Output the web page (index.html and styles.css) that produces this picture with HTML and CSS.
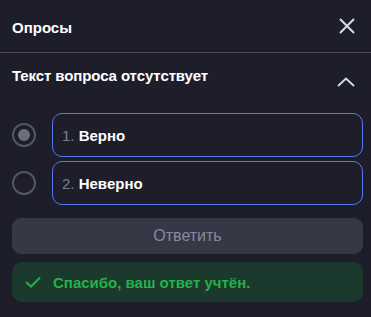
FILE: index.html
```html
<!DOCTYPE html>
<html lang="ru">
<head>
    <meta charset="UTF-8">
    <meta name="viewport" content="width=device-width, initial-scale=1.0">
    <title>Опросы</title>
    <link rel="stylesheet" href="styles.css">
</head>
<body>
    <div class="panel">
        <div class="panel_header">
            <span class="panel_title">Опросы</span>
            <svg class="icon_close" width="16" height="16" viewBox="0 0 16 16">
                <path d="M1 1 L15 15 M15 1 L1 15" stroke="#d6daef" stroke-width="2" fill="none"/>
            </svg>
        </div>

        <div class="question">
            <span class="question_text">Текст вопроса отсутствует</span>
            <svg class="icon_chevron" width="18" height="10" viewBox="0 0 18 10">
                <path d="M1 9 L9 1.5 L17 9" stroke="#d6daef" stroke-width="1.8" fill="none"/>
            </svg>
        </div>

        <div class="options">
            <div class="option">
                <span class="radio checked"></span>
                <div class="option_box"><span class="num">1.</span> Верно</div>
            </div>
            <div class="option">
                <span class="radio"></span>
                <div class="option_box"><span class="num">2.</span> Неверно</div>
            </div>
        </div>

        <button class="answer_btn" disabled>Ответить</button>

        <div class="success">
            <svg class="icon_check" width="16" height="12" viewBox="0 0 16 12">
                <path d="M1 6 L6 10.5 L15 1.5" stroke="#22b348" stroke-width="2" fill="none"/>
            </svg>
            <span>Спасибо, ваш ответ учтён.</span>
        </div>
    </div>
</body>
</html>
```

FILE: styles.css
```css
body {
    margin: 0;
    padding: 0;
    background-color: #1e1e2b;
    font-family: "Liberation Sans", Arial, sans-serif;
    color: #ffffff;
}

.panel {
    background-color: #1e1e2b;
    border-top-left-radius: 6px;
    min-height: 317px;
    box-sizing: border-box;
    padding-bottom: 12px;
}

.panel_header {
    height: 52px;
    display: flex;
    align-items: center;
    justify-content: space-between;
    padding: 0 16px 0 12px;
    border-bottom: 1px solid #4b4b5c;
}

.panel_title {
    font-size: 15px;
    font-weight: bold;
    margin-top: 2px;
}

.icon_close {
    margin-top: -1px;
}

.question {
    display: flex;
    justify-content: space-between;
    align-items: flex-start;
    padding: 14px 16px 0 12px;
    height: 46px;
}

.question_text {
    font-size: 15px;
    font-weight: bold;
    letter-spacing: -0.1px;
}

.icon_chevron {
    margin-top: 10px;
}

.options {
    display: flex;
    flex-direction: column;
    gap: 4px;
    padding: 0 8px 0 12px;
}

.option {
    display: flex;
    align-items: center;
    gap: 16px;
}

.radio {
    width: 20px;
    height: 20px;
    border: 2px solid #545566;
    border-radius: 50%;
    flex-shrink: 0;
    display: flex;
    align-items: center;
    justify-content: center;
}

.radio.checked::after {
    content: "";
    width: 12px;
    height: 12px;
    border-radius: 50%;
    background-color: #6c6d7f;
}

.option_box {
    flex: 1;
    height: 42px;
    border: 1px solid #5878f0;
    border-radius: 10px;
    display: flex;
    align-items: center;
    padding-left: 9px;
    font-size: 15px;
    font-weight: bold;
    white-space: pre;
}

.num {
    color: #7d7f90;
    font-weight: normal;
}

.answer_btn {
    display: block;
    width: calc(100% - 20px);
    margin: 13px 8px 0 12px;
    height: 36px;
    border: none;
    border-radius: 9px;
    background-color: #373846;
    color: #878a9c;
    font-family: "Liberation Sans", Arial, sans-serif;
    font-size: 16px;
}

.success {
    display: flex;
    align-items: center;
    gap: 12px;
    margin: 8px 8px 0 12px;
    height: 40px;
    padding-left: 13px;
    border-radius: 10px;
    background-color: #1c392d;
    color: #22b348;
    font-size: 15px;
    font-weight: bold;
}
```
